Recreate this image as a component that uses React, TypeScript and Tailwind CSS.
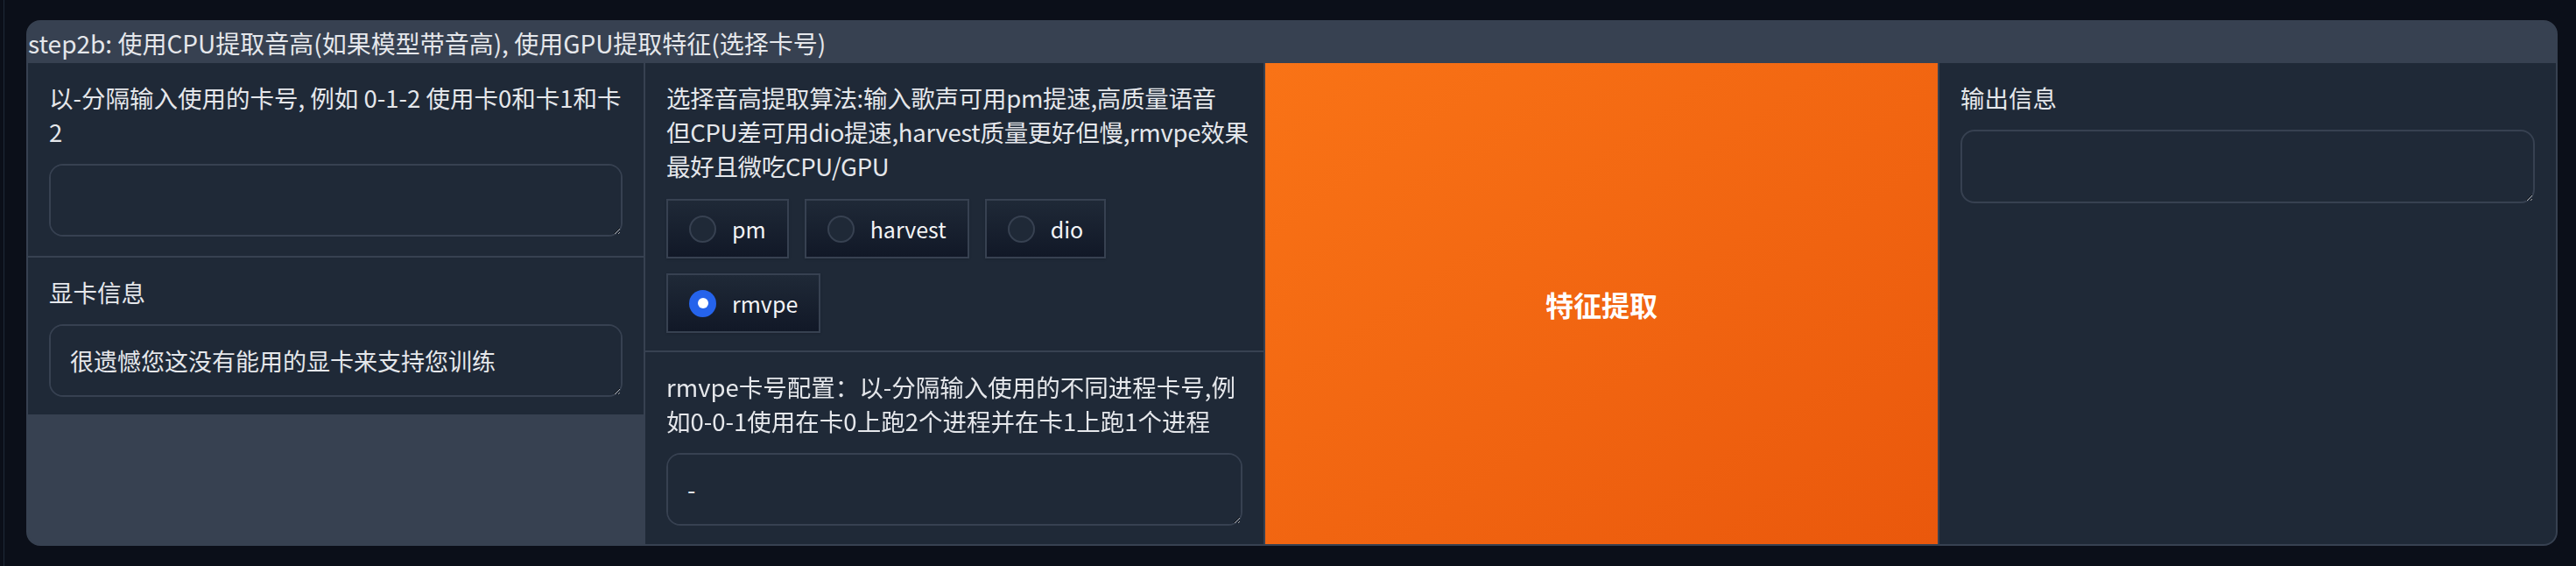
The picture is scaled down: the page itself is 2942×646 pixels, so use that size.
import { useState } from "react";

const CJK = "font-['Noto_Sans_CJK_SC','Noto_Sans',sans-serif]";

function Label({ children }: { children: React.ReactNode }) {
  return (
    <p className={`${CJK} text-[27.5px] leading-[39px] text-[#e5e7eb] mb-[17px]`}>
      {children}
    </p>
  );
}

function Box({ value = "", className = "" }: { value?: string; className?: string }) {
  return (
    <textarea
      defaultValue={value}
      rows={1}
      className={`${CJK} block w-full h-[83px] resize-y rounded-[16px] border-2 border-[#374151] bg-[#1f2937] px-[22px] py-[19px] text-[27px] leading-[42px] text-[#e5e7eb] outline-none [color-scheme:dark] ${className}`}
    />
  );
}

function Radio({ label, checked, onPick }: { label: string; checked: boolean; onPick: () => void }) {
  return (
    <button
      onClick={onPick}
      className="flex h-[68px] items-center gap-[18px] border-2 border-[#374151] bg-linear-to-t from-[#111827] to-[#1f2937] px-[24px] shadow-sm"
    >
      <span
        className={`flex h-[31px] w-[31px] items-center justify-center rounded-full ${
          checked ? "bg-[#2563eb]" : "border-2 border-[#374151] bg-[#1f2937]"
        }`}
      >
        {checked && <span className="h-[12px] w-[12px] rounded-full bg-white" />}
      </span>
      <span className={`${CJK} text-[25px] leading-none text-[#f3f4f6]`}>{label}</span>
    </button>
  );
}

const ALGOS = ["pm", "harvest", "dio", "rmvpe"];

export default function App() {
  const [algo, setAlgo] = useState("rmvpe");

  return (
    <div className="h-[646px] w-full overflow-hidden bg-[#0b0f19]">
      <div className="ml-[4px] h-full border-l border-[#1f2937] pl-[25px] pr-[21px] pt-[23px]">
        {/* Group */}
        <div className="overflow-hidden rounded-[16px] border-2 border-[#374151] bg-[#374151]">
          {/* Header */}
          <div className={`${CJK} h-[47px] flex items-center text-[28px] text-[#e5e7eb]`}>
            step2b: 使用CPU提取音高(如果模型带音高), 使用GPU提取特征(选择卡号)
          </div>

          {/* Body */}
          <div className="flex h-[549px] gap-[2px]">
            {/* Left column */}
            <div className="flex w-[703px] flex-col gap-[2px]">
              <div className="bg-[#1f2937] px-[24px] pt-[20px] pb-[22px]">
                <Label>以-分隔输入使用的卡号, 例如 0-1-2 使用卡0和卡1和卡2</Label>
                <Box />
              </div>
              <div className="bg-[#1f2937] px-[24px] py-[20px]">
                <Label>显卡信息</Label>
                <Box value="很遗憾您这没有能用的显卡来支持您训练" />
              </div>
            </div>

            {/* Middle column */}
            <div className="flex w-[706px] flex-col gap-[2px]">
              <div className="bg-[#1f2937] px-[24px] pt-[20px] pb-[20px]">
                <p className={`${CJK} whitespace-nowrap text-[27.5px] leading-[39px] tracking-[-0.3px] text-[#e5e7eb] mb-[18px]`}>
                  选择音高提取算法:输入歌声可用pm提速,高质量语音<br />
                  但CPU差可用dio提速,harvest质量更好但慢,rmvpe效果<br />
                  最好且微吃CPU/GPU
                </p>
                <div className="flex flex-wrap gap-x-[18px] gap-y-[17px]">
                  {ALGOS.map(a => (
                    <Radio key={a} label={a} checked={algo === a} onPick={() => setAlgo(a)} />
                  ))}
                </div>
              </div>
              <div className="flex-1 bg-[#1f2937] px-[24px] pt-[20px]">
                <Label>rmvpe卡号配置：以-分隔输入使用的不同进程卡号,例如0-0-1使用在卡0上跑2个进程并在卡1上跑1个进程</Label>
                <Box value="-" />
              </div>
            </div>

            {/* Action button */}
            <button
              className={`${CJK} w-[768px] bg-linear-to-br from-[#f97316] to-[#ea580c] text-[32px] font-bold text-white`}
            >
              特征提取
            </button>

            {/* Right column */}
            <div className="flex-1 bg-[#1f2937] px-[24px] pt-[20px]">
              <Label>输出信息</Label>
              <Box className="h-[84px]" />
            </div>
          </div>
        </div>
      </div>
    </div>
  );
}
